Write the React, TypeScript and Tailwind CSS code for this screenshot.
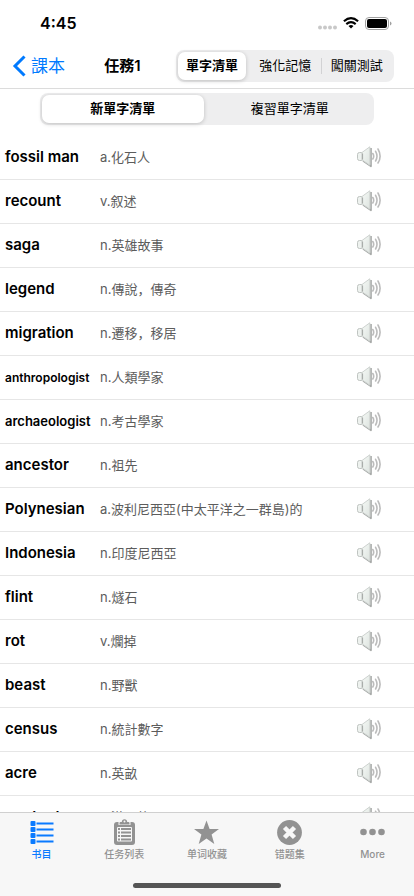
import React from "react";

const words: { word: string; meaning: string; size?: string }[] = [
  { word: "fossil man", meaning: "a.化石人" },
  { word: "recount", meaning: "v.叙述" },
  { word: "saga", meaning: "n.英雄故事" },
  { word: "legend", meaning: "n.傳說，傳奇" },
  { word: "migration", meaning: "n.遷移，移居" },
  { word: "anthropologist", meaning: "n.人類學家", size: "text-[12px]" },
  { word: "archaeologist", meaning: "n.考古學家", size: "text-[13px]" },
  { word: "ancestor", meaning: "n.祖先" },
  { word: "Polynesian", meaning: "a.波利尼西亞(中太平洋之一群島)的" },
  { word: "Indonesia", meaning: "n.印度尼西亞" },
  { word: "flint", meaning: "n.燧石" },
  { word: "rot", meaning: "v.爛掉" },
  { word: "beast", meaning: "n.野獸" },
  { word: "census", meaning: "n.統計數字" },
  { word: "acre", meaning: "n.英畝" },
  { word: "content", meaning: "a.滿足的" },
];

function SpeakerIcon() {
  return (
    <svg width="26" height="24" viewBox="0 0 26 24" fill="none" aria-hidden="true">
      <defs>
        <linearGradient id="cone" x1="0" y1="0" x2="1" y2="1">
          <stop offset="0" stopColor="#f6faf7" />
          <stop offset="1" stopColor="#dde3df" />
        </linearGradient>
      </defs>
      <path d="M7 15.800L15 21.300V3" stroke="#a3a6a4" strokeWidth="1.600" strokeLinejoin="round" />
      <rect x="1.500" y="7.500" width="5.500" height="8" rx="2" fill="#eef2ef" stroke="#bfc4c1" />
      <path d="M6 7.500L13.800 1.800V20.200L6 14.800Z" fill="url(#cone)" stroke="#cdd2cf" strokeLinejoin="round" />
      <path d="M6.500 8.500V14.500" stroke="#a9adaa" strokeWidth="1.200" />
      <path d="M16.800 8.500Q18.600 11.300 16.800 14M19.600 6.300Q22.400 11.300 19.600 16M22 4Q26.200 11.300 22 18" stroke="#bcbcbc" strokeWidth="1.600" strokeLinecap="round" />
    </svg>
  );
}

function ListIcon() {
  return (
    <svg width="26" height="26" viewBox="0 0 26 26" fill="currentColor" aria-hidden="true">
      {[2, 8, 14, 20].map((y) => (
        <g key={y}>
          <rect x="2.500" y={y} width="5" height="5" rx="1" />
          <rect x="8.500" y={y + 1.5} width="17" height="2" />
        </g>
      ))}
    </svg>
  );
}

function ClipboardIcon() {
  return (
    <svg width="26" height="26" viewBox="0 0 26 26" aria-hidden="true">
      <rect x="3" y="3" width="21" height="23" rx="3" fill="currentColor" />
      <path d="M7.500 2H19.500V6H7.500Z" fill="#f7f7f7" />
      <path d="M8.500 5.500V4Q8.500 3 9.500 3H10.800Q11 .2 13.500 .2T16.200 3H17.500Q18.500 3 18.500 4V5.500Z" fill="currentColor" />
      <circle cx="13.500" cy="2.600" r="1" fill="#f7f7f7" />
      <rect x="6" y="8" width="15" height="14.500" rx="1" fill="#f7f7f7" />
      <path d="M7 10H9M10 10H20M7 13.500H9M10 13.500H20M7 17H9M10 17H20M7 20.500H9M10 20.500H20" stroke="currentColor" strokeWidth="2" />
    </svg>
  );
}

function StarIcon() {
  return (
    <svg width="26" height="26" viewBox="0 0 26 26" fill="currentColor" aria-hidden="true">
      <path d="M12.500 1.500L15.600 10H25L17.600 15.600L20.300 25L12.500 19.400L4.700 25L7.400 15.600L0 10H9.400Z" />
    </svg>
  );
}

function CrossIcon() {
  return (
    <svg width="26" height="26" viewBox="0 0 26 26" aria-hidden="true">
      <circle cx="12.500" cy="13.500" r="12.400" fill="currentColor" />
      <path d="M7.500 8.500L17.500 18.500M17.500 8.500L7.500 18.500" stroke="#f7f7f7" strokeWidth="4.500" />
    </svg>
  );
}

function MoreIcon() {
  return (
    <svg width="26" height="26" viewBox="0 0 26 26" fill="currentColor" aria-hidden="true">
      <circle cx="3.500" cy="13" r="3.300" />
      <circle cx="12.500" cy="13" r="3.300" />
      <circle cx="21.500" cy="13" r="3.300" />
    </svg>
  );
}

const tabs = [
  { label: "书目", Icon: ListIcon, active: true },
  { label: "任务列表", Icon: ClipboardIcon },
  { label: "单词收藏", Icon: StarIcon },
  { label: "错题集", Icon: CrossIcon },
  { label: "More", Icon: MoreIcon },
];

function StatusBar() {
  return (
    <div className="flex h-11 items-center justify-between pr-[22px] pl-10 pt-0.5">
      <span className="text-[16px] leading-5 font-semibold">4:45</span>
      <div className="flex items-center gap-1.5">
        <svg width="19" height="5" viewBox="0 0 19 5" fill="#c8c8c8" className="mt-2" aria-hidden="true">
          <circle cx="2" cy="2.500" r="2" />
          <circle cx="7" cy="2.500" r="2" />
          <circle cx="12" cy="2.500" r="2" />
          <circle cx="17" cy="2.500" r="2" />
        </svg>
        <svg width="16" height="12" viewBox="0 0 16 12" fill="none" stroke="#000" strokeWidth="2.100" aria-hidden="true">
          <path d="M.9 4.300Q8 -2 15.100 4.300M3.300 7.100Q8 3 12.700 7.100" />
          <path d="M8 11.500L5.500 9Q8 7 10.500 9Z" fill="#000" stroke="none" />
        </svg>
        <svg width="27" height="13" viewBox="0 0 27 13" aria-hidden="true">
          <rect x=".5" y=".5" width="23" height="12" rx="3.500" fill="none" stroke="#a0a0a0" />
          <rect x="2" y="2" width="20" height="9" rx="2" />
          <path d="M25 4.500Q26.500 5 26.500 6.500T25 8.500Z" fill="#a0a0a0" />
        </svg>
      </div>
    </div>
  );
}

export default function App() {
  return (
    <div className="flex h-screen flex-col overflow-hidden bg-white font-[Inter,'Noto_Sans_CJK_TC',sans-serif] text-black">
      <StatusBar />
      <header className="flex h-[45px] shrink-0 items-center border-b border-[#dcdcdc] pr-5 pl-3">
        <button className="flex items-center gap-1 text-[17px] leading-6 text-[#007aff]">
          <svg width="15" height="22" viewBox="0 0 15 22" fill="none" stroke="currentColor" strokeWidth="3" aria-hidden="true">
            <path d="M12.500 1.500L3 11L12.500 20.500" />
          </svg>
          課本
        </button>
        <h1 className="flex-1 pl-1 text-center text-[15px] leading-6 font-semibold">任務1</h1>
        <div className="flex h-8 w-[218px] rounded-lg bg-[#eeeeef] p-0.5 text-[13px]">
          <button className="mr-1 w-[68px] rounded-[7px] bg-white font-semibold shadow-[0_1px_4px_rgba(0,0,0,0.2)]">單字清單</button>
          <button className="flex-1">強化記憶</button>
          <span className="my-1.5 w-px bg-[#d2d2d4]" />
          <button className="flex-1">闖關測試</button>
        </div>
      </header>
      <div className="flex h-[47px] shrink-0 items-start px-10 pt-1">
        <div className="flex h-8 flex-1 rounded-lg bg-[#eeeeef] p-0.5 text-[13px]">
          <button className="w-[49%] rounded-[7px] bg-white font-semibold shadow-[0_1px_4px_rgba(0,0,0,0.2)]">新單字清單</button>
          <button className="flex-1 pl-1">複習單字清單</button>
        </div>
      </div>
      <ul className="min-h-0 flex-1 overflow-hidden">
        {words.map(({ word, meaning, size }) => (
          <li key={word} className="flex h-11 items-center border-b border-[#e6e6e6] pr-8 pl-[5px]">
            <span className={"w-[95px] shrink-0 whitespace-nowrap font-semibold " + (size ?? "text-[15px]")}>{word}</span>
            <span className="flex-1 font-[Inter,'Noto_Sans_CJK_SC',sans-serif] text-[13px] text-[#5c5c5c]">{meaning}</span>
            <button className="pb-0.5" aria-label={"播放 " + word}>
              <SpeakerIcon />
            </button>
          </li>
        ))}
      </ul>
      <nav className="flex h-[84px] shrink-0 flex-col justify-between border-t border-[#d0d0d0] bg-[#f7f7f7] pb-2">
        <div className="flex pt-1.5 font-[Inter,'Noto_Sans_CJK_SC',sans-serif]">
          {tabs.map(({ label, Icon, active }) => (
            <button key={label} className={"flex flex-1 flex-col items-center gap-px text-[10px] leading-4 font-medium " + (active ? "text-[#0a7aff]" : "text-[#929292]")}>
              <Icon />
              {label}
            </button>
          ))}
        </div>
        <div className="mx-auto h-[5px] w-[148px] rounded-full bg-[#555555]" />
      </nav>
    </div>
  );
}
